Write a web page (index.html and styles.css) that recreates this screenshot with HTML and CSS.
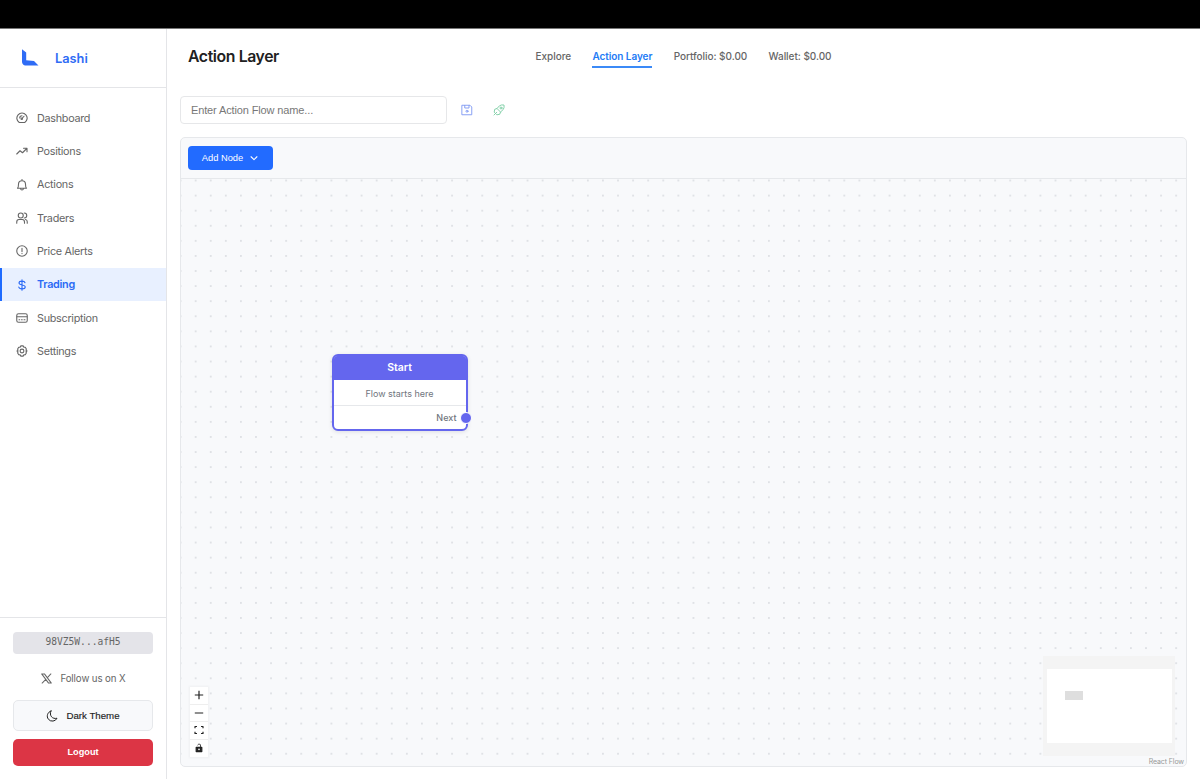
FILE: index.html
```html
<!DOCTYPE html>
<html lang="en">
<head>
<meta charset="utf-8">
<title>Lashi – Action Layer</title>
<link rel="stylesheet" href="styles.css">
</head>
<body>
<div class="topbar"></div>
<div class="app">
  <aside class="sidebar">
    <div class="brand">
      <svg class="brand-logo" viewBox="0 0 18 18"><path d="M1 .3 5.200 3.600V11.300L13 12 17.500 16.500 4 16.600Q1 15.600 1 12.500Z" fill="#2f6cf5"/></svg>
      <span class="brand-name">Lashi</span>
    </div>
    <nav class="menu">
      <a class="item"><svg class="icon" viewBox="0 0 24 24"><path d="M6.500 21a10.300 10.300 0 1 1 11 0ZM12.500 12.500 16 8.500M7.500 12a4.500 4.500 0 0 1 4.500-4.500"/><circle cx="11.500" cy="13.500" r="1.500"/></svg><span>Dashboard</span></a>
      <a class="item"><svg class="icon" viewBox="0 0 24 24"><path d="M1.500 18 8 11.500l5 4L21.500 7M15 6.500h7v7"/></svg><span>Positions</span></a>
      <a class="item"><svg class="icon" viewBox="0 0 24 24"><path d="M3 18.500c1.800-1.500 2-3 2-8a7 7 0 0 1 14 0c0 5 .2 6.500 2 8ZM9 19c.5 4 5.500 4 6 0M12 1v2.500"/></svg><span>Actions</span></a>
      <a class="item"><svg class="icon" viewBox="0 0 24 24"><circle cx="9.500" cy="7" r="5"/><path d="M1.500 22.500v-2.500c0-3 2-5 4.500-5h6.500c2.500 0 4.500 2 4.500 5v2.500M16.500 2a5 5 0 0 1 0 10M19 15c2 .5 3.500 2.200 3.500 4.500v3"/></svg><span>Traders</span></a>
      <a class="item"><svg class="icon" viewBox="0 0 24 24"><circle cx="12" cy="12" r="10.500"/><path d="M12 6.500v6.500M12 16.800v.4"/></svg><span>Price Alerts</span></a>
      <a class="item active"><svg class="icon" viewBox="0 0 24 24"><path d="M18 7.500c-.5-2-2.700-3.200-6-3.200-3.400 0-6 1.400-6 3.800 0 5.400 12.500 2.300 12.500 7.700 0 2.400-2.700 3.900-6.500 3.900-3.500 0-6-1.200-6.500-3.700M12 1.500v21"/></svg><span>Trading</span></a>
      <a class="item"><svg class="icon" viewBox="0 0 24 24"><rect x="1.500" y="3.500" width="21" height="17" rx="3.500"/><path d="M2 9.500h20M6 15.500h1.500M11 15.500h1.500M16 15.500h2"/></svg><span>Subscription</span></a>
      <a class="item"><svg class="icon" viewBox="0 0 24 24"><path d="M9.800 1.800h4.400l1.500 2.400 2.800.2 2.200 3.600-.7 2.500 2 1.500-2 1.500.7 2.500-2.200 3.600-2.800.2-1.500 2.400H9.800l-1.500-2.400-2.800-.2L3.300 16l.7-2.500L2 12l2-1.500L3.300 8l2.200-3.600 2.800-.2Z"/><circle cx="12" cy="12" r="3.800"/></svg><span>Settings</span></a>
    </nav>
    <div class="account">
      <div class="address">98VZ5W...afH5</div>
      <a class="follow"><svg class="x-icon" viewBox="0 0 24 24"><path d="M1.500 2h6L22.500 22h-6ZM21.500 2 13.500 10.500M10.500 14 2.500 22"/></svg><span>Follow us on X</span></a>
      <button class="theme"><svg class="moon-icon" viewBox="0 0 24 24"><path d="M10 2a10.300 10.300 0 1 0 12 14.500c-4.500 1-8.500 0-11-3s-3-7.500-1-11.500Z"/></svg><span>Dark Theme</span></button>
      <button class="logout">Logout</button>
    </div>
  </aside>
  <main class="main">
    <header class="header">
      <h1 class="title">Action Layer</h1>
      <nav class="tabs">
        <a class="tab">Explore</a>
        <a class="tab current">Action Layer</a>
        <a class="tab">Portfolio: $0.00</a>
        <a class="tab">Wallet: $0.00</a>
      </nav>
    </header>
    <div class="flow-form">
      <input class="flow-name" type="text" placeholder="Enter Action Flow name...">
      <svg class="form-icon save" viewBox="0 0 24 24"><path d="M2.500 2.500h15.500L21.500 6V21.500h-19ZM7.500 3v5h8.500V3"/><circle cx="12" cy="14.500" r="2"/></svg>
      <svg class="form-icon deploy" viewBox="0 0 24 24"><path d="M2.500 15.500 3.500 10.500 8 9l5-5.500Q17 1 22 2q1 5-1.500 9L15 16l-1.500 4.500-5 1ZM8 9l7 7M7.500 16.500 2 22"/><circle cx="16" cy="8" r="2"/></svg>
    </div>
    <section class="editor">
      <div class="toolbar">
        <button class="add-node"><span>Add Node</span><svg class="chevron" viewBox="0 0 12 12"><path d="M2.500 4.500 6 8l3.500-3.500"/></svg></button>
      </div>
      <div class="canvas">
        <svg class="dots" width="100%" height="100%">
          <defs><pattern id="grid" x="7.130" y="-6.040" width="15.085" height="15.085" patternUnits="userSpaceOnUse"><circle cx="7.540" cy="7.540" r=".68" fill="#b8bcc3"/></pattern></defs>
          <rect width="100%" height="100%" fill="url(#grid)"/>
        </svg>
        <div class="node">
          <div class="node-head">Start</div>
          <div class="node-body">Flow starts here</div>
          <div class="node-out">Next</div>
          <i class="handle"></i>
        </div>
        <div class="controls">
          <span class="control"><svg viewBox="0 0 10 10"><path d="M5 .8v8.400M.8 5h8.400"/></svg></span>
          <span class="control"><svg viewBox="0 0 10 10"><path d="M.8 5h8.400"/></svg></span>
          <span class="control"><svg viewBox="0 0 10 10"><path d="M1 3.300V1.500h2M7 1.500h2v1.800M9 6.700v1.800H7M3 8.500H1V6.700"/></svg></span>
          <span class="control"><svg viewBox="0 0 10 10"><path d="M3.500 2.200Q4.800 0 6.500 1.700V4" stroke-width=".8"/><path class="lock" d="M2.200 4.400h5.600v4.200H2.200Z"/><circle cx="5" cy="6.400" r=".8" fill="#fff" stroke="none"/></svg></span>
        </div>
        <div class="minimap"><div class="minimap-view"><i class="minimap-node"></i></div></div>
        <div class="attribution">React Flow</div>
      </div>
    </section>
  </main>
</div>
</body>
</html>
```
FILE: styles.css
```css
* { box-sizing: border-box; }
body { margin: 0; height: 779px; overflow: hidden; display: flex; flex-direction: column; background: #fff; font-family: Inter, "Liberation Sans", sans-serif; color: #666; }
button, input { font-family: inherit; margin: 0; }
svg { display: block; flex: none; fill: none; stroke: currentColor; stroke-linecap: round; stroke-linejoin: round; }
.topbar { height: 28px; flex: none; background: #000; }
.app { flex: 1; display: flex; min-height: 0; border-top: 1px solid #777; }

.sidebar { width: 167px; flex: none; display: flex; flex-direction: column; border-right: 1px solid #e4e5e8; }
.brand { height: 59px; flex: none; display: flex; align-items: center; gap: 16px; padding-left: 21px; border-bottom: 1px solid #e4e5e8; }
.brand-logo { width: 18px; height: 18px; stroke: none; }
.brand-name { color: #2f6cf5; font-size: 12.800px; font-weight: 600; }
.menu { flex: 1; padding-top: 13.400px; }
.item { height: 33.330px; display: flex; align-items: center; gap: 9px; padding-left: 16px; font-size: 10.800px; letter-spacing: -.28px; color: #666; }
.item span { padding-top: .5px; }
.item.active { background: #e8f0ff; color: #2b6af5; font-weight: 600; padding-left: 14px; border-left: 2px solid #1f6bff; }
.icon { width: 12px; height: 12px; stroke-width: 2.200; }
.account { height: 162px; flex: none; display: flex; flex-direction: column; padding: 13.500px 13px 13px; border-top: 1px solid #e4e5e8; }
.address { height: 22px; margin-bottom: 13.500px; border-radius: 4px; background: #e4e4e9; display: flex; align-items: center; justify-content: center; font: 9.600px/20px "DejaVu Sans Mono", monospace; padding-bottom: 1px; color: #666; }
.follow { height: 23px; display: flex; align-items: center; justify-content: center; gap: 8px; padding-left: 1px; font-size: 9.700px; letter-spacing: -.1px; color: #666; }
.x-icon { width: 11px; height: 11px; stroke-width: 2.200; }
.theme { height: 31px; margin-top: 10px; display: flex; align-items: center; justify-content: center; gap: 8px; padding: 0; border: 1px solid #e6e8eb; border-radius: 5px; background: #f8f9fb; font-family: "Liberation Sans", Arial, sans-serif; font-size: 9.700px; color: #222; -webkit-text-stroke: .15px #222; }
.moon-icon { width: 12px; height: 12px; stroke-width: 2; }
.logout { height: 27px; margin-top: 8px; padding: 0 0 1px; border: 0; border-radius: 5px; background: #dc3545; color: #fff; font-family: "Liberation Sans", Arial, sans-serif; font-size: 9.200px; font-weight: 700; }

.main { flex: 1; min-width: 0; display: flex; flex-direction: column; padding: 0 13px 12px; }
.header { height: 55px; flex: none; display: flex; padding-left: 8px; }
.title { width: 347.500px; margin: 0; font-size: 15.800px; line-height: 56px; font-weight: 600; color: #212121; letter-spacing: -.4px; }
.tabs { display: flex; gap: 21.300px; align-items: flex-start; padding-top: 18px; }
.tab { height: 21px; line-height: 18px; font-size: 10px; letter-spacing: -.04px; font-weight: 500; white-space: nowrap; }
.tab.current { color: #237bf5; font-weight: 600; border-bottom: 2px solid #3b8af7; letter-spacing: -.06px; }
.flow-form { height: 53px; flex: none; display: flex; align-items: flex-start; padding-top: 12px; }
.flow-name { width: 267px; height: 28px; border: 1px solid #e6e7e9; border-radius: 4px; padding: 0 10px; font-family: "Liberation Sans", Arial, sans-serif; font-size: 11px; letter-spacing: -.13px; color: #333; background: #fff; }
.flow-name::placeholder { color: #777; opacity: 1; }
.form-icon { width: 12px; height: 12px; margin-top: 8px; stroke-width: 1.900; }
.save { margin-left: 14px; color: #839cf3; }
.deploy { margin-left: 20px; color: #7fcfa6; }
.editor { flex: 1; min-height: 0; display: flex; flex-direction: column; border: 1px solid #e6e8eb; border-radius: 5px; background: #f8f9fb; overflow: hidden; }
.toolbar { height: 41px; flex: none; padding: 8px 7px; border-bottom: 1px solid #e6e8eb; }
.add-node { width: 85px; height: 24px; display: flex; align-items: center; justify-content: center; gap: 6px; padding: 0; border: 0; border-radius: 4px; background: #226bff; color: #fff; font-family: "Liberation Sans", Arial, sans-serif; font-size: 9.300px; }
.chevron { width: 10px; height: 10px; stroke-width: 1.300; }

.canvas { flex: 1; min-height: 0; position: relative; }
.dots { width: 100%; height: 100%; stroke: none; }
.node { position: absolute; left: 150.500px; top: 174.500px; width: 136px; height: 77px; border: 2px solid #6466ee; border-radius: 6px; background: #fff; box-shadow: 0 1px 4px rgba(30, 35, 60, .12); text-align: center; }
.node-head { height: 24px; line-height: 24px; background: #6466ee; border-radius: 3px 3px 0 0; color: #fff; font-size: 10.500px; font-weight: 600; }
.node-body { height: 26px; line-height: 27px; border-bottom: 1px solid #e6e8eb; font-size: 9px; color: #70757d; }
.node-out { line-height: 23px; padding-right: 9px; text-align: right; font-size: 9px; font-weight: 500; color: #70757d; }
.handle { position: absolute; right: -6px; bottom: 5px; width: 12px; height: 12px; border: 1.500px solid #fff; border-radius: 50%; background: #6466ee; }
.controls { position: absolute; left: 9px; top: 508px; width: 18px; background: #fff; box-shadow: 0 0 2px 1px rgba(0, 0, 0, .04); }
.control { height: 17.500px; display: flex; align-items: center; justify-content: center; border-bottom: 1px solid #eee; color: #222; }
.control:last-child { border-bottom: 0; }
.control svg { width: 10px; height: 10px; stroke-width: 1.200; stroke-linecap: butt; }
.lock { fill: currentColor; }
.minimap { position: absolute; left: 862px; top: 477px; width: 132px; height: 100px; padding: 13px 3px 13px 4px; background: #f4f4f4; }
.minimap-view { height: 74px; background: #fff; padding: 22px 0 0 18px; }
.minimap-node { display: block; width: 18px; height: 9px; background: #dedede; }
.attribution { position: absolute; right: 2px; bottom: -1px; font-size: 7px; letter-spacing: -.1px; line-height: 10px; color: #999; }
```
